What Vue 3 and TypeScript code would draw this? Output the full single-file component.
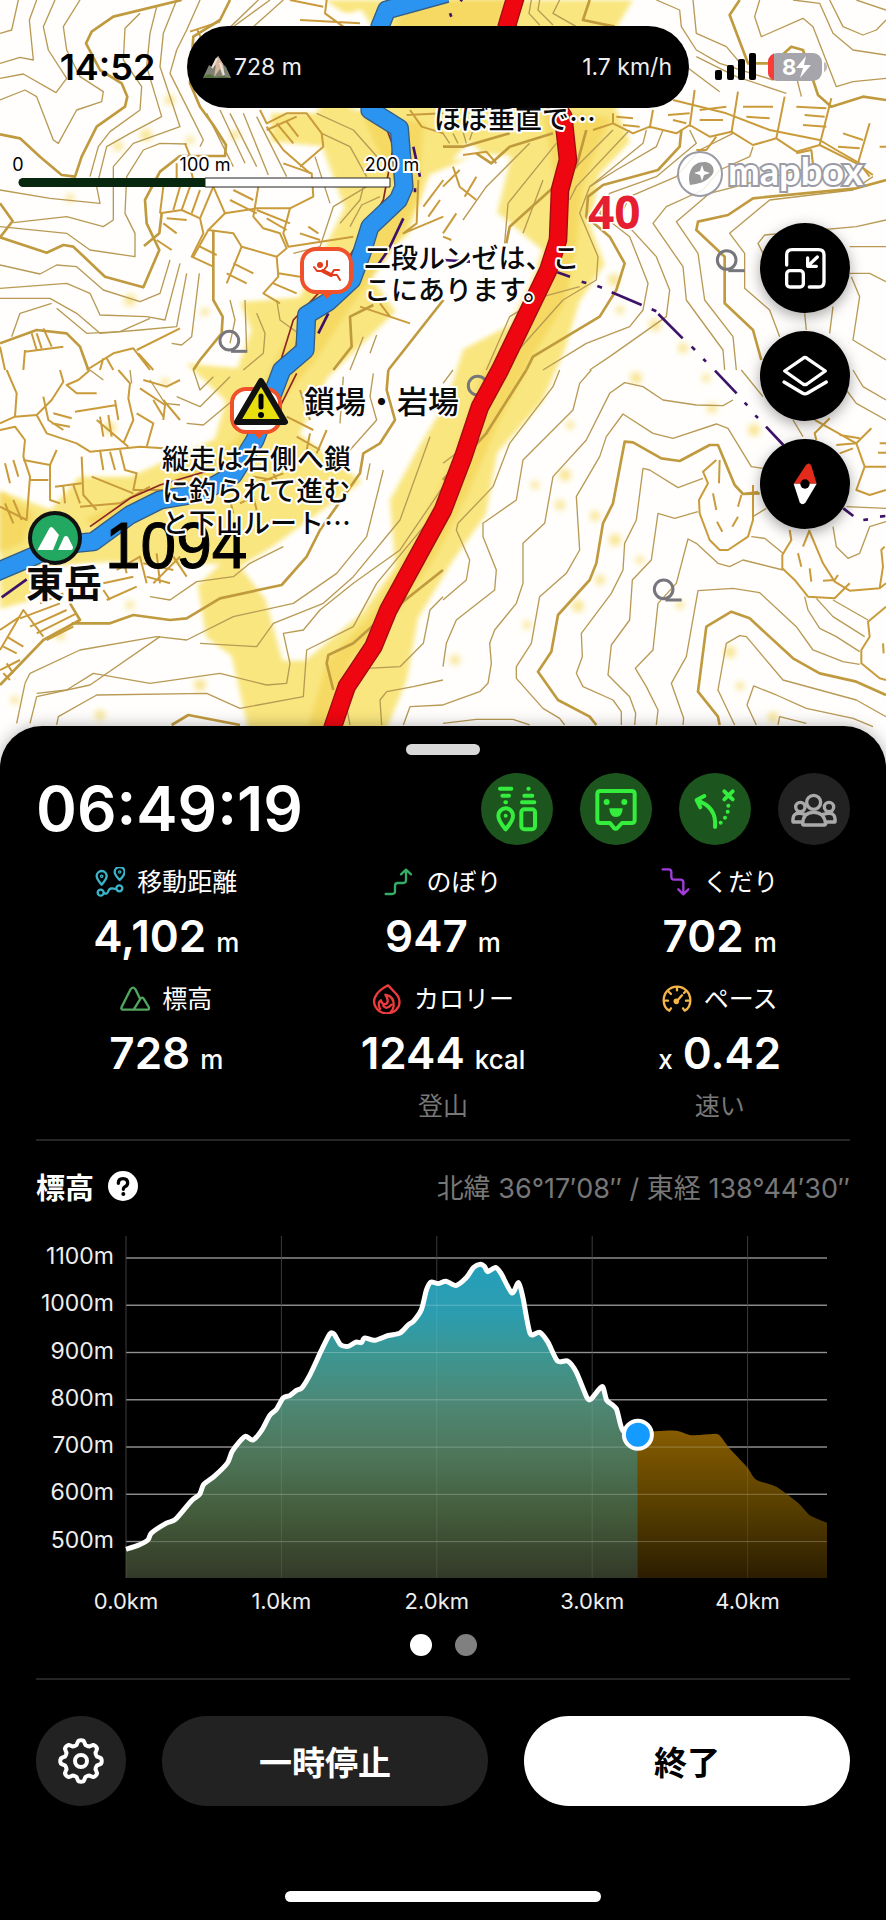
<script setup lang="ts">
type Point = [number, number]

interface Metric {
  icon: string
  label: string
  value: string
  unit: string
  prefix?: boolean
  note?: string
}

const metrics: Metric[] = [
  { icon: 'distance', label: '移動距離', value: '4,102', unit: 'm' },
  { icon: 'climb', label: 'のぼり', value: '947', unit: 'm' },
  { icon: 'descend', label: 'くだり', value: '702', unit: 'm' },
  { icon: 'mountain', label: '標高', value: '728', unit: 'm' },
  { icon: 'flame', label: 'カロリー', value: '1244', unit: 'kcal', note: '登山' },
  { icon: 'gauge', label: 'ペース', value: '0.42', unit: 'x', prefix: true, note: '速い' },
]

/* elevation profile, [km, m] */
const walked: Point[] = [
  [0, 484], [0.077, 492], [0.142, 504], [0.163, 518], [0.26, 539], [0.318, 547], [0.42, 586],
  [0.474, 600], [0.5, 621], [0.571, 639], [0.652, 666], [0.682, 690], [0.732, 712], [0.77, 723],
  [0.818, 715], [0.876, 737], [0.925, 767], [0.968, 780], [1.011, 804], [1.054, 809], [1.097, 820],
  [1.133, 826], [1.187, 855], [1.258, 905], [1.311, 939], [1.339, 939], [1.38, 917], [1.429, 913],
  [1.479, 922], [1.515, 921], [1.536, 931], [1.601, 926], [1.687, 936], [1.762, 941], [1.815, 958],
  [1.852, 967], [1.901, 991], [1.933, 1032], [1.961, 1049], [2.009, 1046], [2.06, 1051],
  [2.124, 1042], [2.189, 1058], [2.236, 1080], [2.281, 1087], [2.307, 1082], [2.328, 1071],
  [2.378, 1080], [2.414, 1067], [2.483, 1026], [2.526, 1048], [2.554, 1017], [2.601, 940],
  [2.661, 943], [2.715, 922], [2.777, 882], [2.843, 882], [2.897, 859], [2.966, 805], [2.994, 802],
  [3.064, 828], [3.094, 799], [3.155, 781], [3.197, 735], [3.294, 726],
]
const ahead: Point[] = [
  [3.294, 731], [3.498, 735], [3.562, 733], [3.637, 725], [3.755, 727], [3.815, 726], [3.884, 697],
  [3.996, 658], [4.056, 631], [4.185, 616], [4.324, 582], [4.4, 556], [4.511, 540],
]

const left = 90
const right = 791
const bottom = 358
const px = (km: number) => left + km * 155.4
const py = (m: number) => 38 + (1100 - m) * 0.4727

function curve(points: Point[]): string {
  const p = points.map(([km, m]): Point => [px(km), py(m)])
  let d = `M${p[0][0]} ${p[0][1]}`
  for (let i = 0; i < p.length - 1; i++) {
    const a = p[Math.max(0, i - 1)]
    const b = p[i]
    const c = p[i + 1]
    const e = p[Math.min(p.length - 1, i + 2)]
    const k = 8
    d += ` C${b[0] + (c[0] - a[0]) / k} ${b[1] + (c[1] - a[1]) / k} ${c[0] - (e[0] - b[0]) / k} ${c[1] - (e[1] - b[1]) / k} ${c[0]} ${c[1]}`
  }
  return d
}
const walkedLine = curve(walked)
const walkedArea = `${walkedLine} V${bottom} H${left} Z`
const aheadArea = `${curve(ahead)} V${bottom} H${px(3.294)} Z`
const levels = [1100, 1000, 900, 800, 700, 600, 500]
const kms = [0, 1, 2, 3, 4]

const gear = Array.from({ length: 96 }, (_, i) => {
  const t = (i / 96) * Math.PI * 2
  const r = 18.5 + 2.3 * Math.tanh(2 * Math.cos(8 * t))
  return `${(24 + r * Math.sin(t)).toFixed(2)},${(24 - r * Math.cos(t)).toFixed(2)}`
}).join(' ')

const speckles: Point[] = [
  [70, 198], [118, 146], [146, 135], [190, 140], [235, 135], [130, 300], [205, 312], [170, 100],
  [110, 428], [165, 382], [65, 505], [130, 520], [15, 700], [100, 715], [200, 685], [130, 605],
  [60, 635], [636, 378], [706, 378], [712, 408], [754, 430], [570, 425], [595, 516], [615, 540],
  [640, 560], [600, 580], [578, 606], [527, 625], [455, 660], [730, 652], [740, 686], [773, 717],
  [655, 325], [620, 310], [683, 348], [614, 280], [535, 485], [560, 505], [565, 475], [680, 605],
]

/* contour lines, drawn in thirds of a map unit, one group per tile */
const tiles = [
  {
    x: 0, y: 0,
    thick: [
      'M545 0 L340 50 275 95 258 130 300 210 365 250 382 290 375 320 290 380 245 470 225 530 185 525 120 470 60 415 0 403',
      'M690 0 L660 60 580 110 570 250 600 320 640 375 678 435 675 468 540 468 480 515 435 600 440 670 478 750 430 862 315 830 220 740 190 735 140 758 0 712',
      'M0 610 L38 663 0 712', 'M432 738 L478 700 485 640',
      'M640 690 L640 900 668 950 665 1000 600 1080 580 1110',
      'M1330 900 L1165 1110', 'M1120 915 L1050 950 1055 1040 1000 1110',
      'M0 1030 L110 990 200 1000 240 1040 265 1110',
    ],
    thin: [
      'M55 0 L35 90 0 100', 'M110 0 L88 60 100 180 60 172 0 190', 'M165 0 L130 80 145 150 200 235 168 278 70 222 0 235',
      'M240 0 L190 80 200 150 240 230 310 275 305 305 230 330 175 430 160 420 110 290 75 270 0 300',
      'M420 40 L375 85 370 180 425 260 420 330 330 395 295 440 270 530',
      'M470 20 L450 100 440 200 485 350 390 400 320 440 290 560 300 610 150 595 0 570',
      'M530 0 L490 100 480 200 540 380 400 430 340 500 340 660 310 680 200 650 40 668',
      'M600 0 L560 90 530 150 510 220 560 320 610 420 600 440', 'M560 432 L480 430 430 450 380 530 375 640 405 700 405 770 270 750 200 700 0 680',
      'M0 795 L120 822 170 795 230 800 310 870 420 905 480 880 510 780',
      'M0 865 L200 850 270 880 300 945 440 950 495 960 540 790', 'M0 895 L150 895 230 940 300 1000 420 990 530 980 560 820',
      'M155 910 L60 940 35 1010', 'M170 925 L260 1000 360 995 450 955', 'M515 1030 L545 1035 575 1010 598 820',
      'M775 0 L640 130', 'M810 0 L700 80', 'M850 0 L760 80', 'M620 340 L700 500', 'M660 330 L735 490', 'M690 340 L770 500',
      'M730 340 L805 525', 'M770 350 L860 530', 'M950 340 L1060 390 1140 480', 'M965 400 L1050 440 1100 530',
      'M1090 560 L1080 600 1020 670', 'M1140 590 L1085 615 1050 680', 'M1100 560 L1000 620 960 740 880 760', 'M945 470 L990 610',
      'M690 900 L705 960 690 1030', 'M735 900 L740 1050', 'M770 940 L795 1000 790 1060 730 1110', 'M830 900 L840 960 895 1000 880 1060',
      'M1050 1110 L1090 1010', 'M1110 1060 L1130 1005',
    ],
    cliff: [
      'M480 640 L545 630 600 655 610 700 575 770 640 800', 'M600 655 L640 560 M480 640 L490 560 M545 630 L570 560 M520 630 L540 560 M575 640 L600 570',
      'M490 670 L530 700 M470 720 L515 750 M500 655 L560 660', 'M640 560 L675 640 770 625 870 625 940 590 935 520 850 490',
      'M675 640 L625 690 700 700 725 740 830 770 860 745 840 700 790 685 760 650 775 560', 'M625 690 L580 770 M600 740 L650 765 M700 570 L760 600 M690 600 L770 640',
      'M770 630 L870 670 M800 655 L860 690 M725 740 L680 850 M700 790 L760 820 M680 820 L740 850', 'M830 770 L835 830 790 880 840 910 M835 820 L900 830 M820 850 L890 880',
      'M870 625 L850 700 865 740 1060 710 M900 700 L960 720 M925 680 L955 700', 'M780 330 L800 370 860 340 920 340 965 400 970 440 900 500',
      'M800 390 L890 350 M830 370 L880 430 M860 365 L895 410 M800 380 L850 450 930 520', 'M530 490 L530 560 M555 430 L570 468 M570 500 L580 540',
      'M1230 330 L1265 380 1330 400 M1220 345 L1330 340 M1255 540 L1250 670 1210 700 1330 650', 'M1270 620 L1330 540 M1285 650 L1320 600 M1080 920 L1230 970 M1140 910 L1170 950',
      'M0 1040 L15 1110 M75 1050 L70 1110 M95 1000 L110 1050 M130 985 L155 1040 M75 1055 L190 1040 M110 1000 L125 1045',
      'M260 1110 L340 1060 400 1045 450 1110 M310 1075 L300 1110 M320 1075 L340 1110 M410 1050 L540 985 M415 1060 L460 1110',
      'M900 60 L1080 70 M980 0 L975 40 1030 80 M870 0 L970 20 M570 95 L660 65 M590 85 L610 130',
    ],
  },
  {
    x: 1329, y: 0,
    thick: [
      'M890 0 L860 45 915 190 990 190 1045 140 1080 150 1125 285 1165 320 1260 290 1329 300',
      'M440 0 L420 60 515 80', 'M715 390 L710 440 645 510 480 555 435 590 430 650 500 710 545 790 520 870 470 950 270 1070 250 1110',
      'M1329 540 L1240 565 930 595 855 645 765 665 760 690 845 770 845 910 930 990 955 1080', 'M200 400 L60 440 0 440',
      'M190 730 L200 680 400 500 430 390', 'M100 460 L145 490 200 440 330 400',
    ],
    thin: [
      'M265 0 L258 40 290 75', 'M290 0 L285 30 330 75', 'M350 0 L330 40 400 80', 'M640 0 L710 30 715 80 760 150 830 190 990 240', 'M750 0 L760 100 850 140 905 205',
      'M950 0 L935 50 955 110 1080 55 1110 80 1180 260 1230 245 1329 235', 'M1050 0 L1130 10 1170 100 1230 150 1329 165', 'M1160 0 L1200 80 1260 105 1300 90 1329 60', 'M1240 0 L1329 30',
      'M1060 230 L1075 290', 'M760 170 L880 230 1030 280', 'M730 200 L830 275', 'M740 390 L760 430 640 530 500 580 470 640 560 710 615 850 600 930 560 980 430 1030 300 1110',
      'M870 400 L770 450 700 530 560 590 530 650 640 770 680 870 670 950 500 1070 440 1110', 'M930 440 L920 470 830 510 780 570 670 620 630 670 720 800 730 900 840 1050 845 1110',
      'M1105 450 L1110 500 800 580 700 665 765 760 785 900 870 1010 880 1110', 'M1290 530 L1230 570 980 600 860 700 905 760 905 865 980 930 1010 1010',
      'M1329 660 L1240 680 965 705 945 730 965 770', 'M1329 740 L1220 740', 'M1220 820 L1280 820 1329 845', 'M1225 830 L1250 890 1230 1020 1329 1080', 'M1085 940 L1090 990 M1170 920 L1160 1000',
      'M610 390 L600 430 440 560 410 640 465 770 460 840 360 900 200 1080', 'M560 390 L400 560 380 600', 'M510 390 L400 500', 'M660 390 L640 440 520 510 440 560',
      'M410 860 L300 890 200 950 130 1110', 'M240 700 L300 540 M185 730 L195 610 340 430', 'M60 660 L130 560 260 430', 'M0 400 L20 430 M30 400 L45 430 M60 395 L70 430 M90 390 L80 420',
    ],
    cliff: [
      'M690 300 L850 340 980 390 1130 420 1180 450 1250 490 1280 530', 'M450 390 L510 370 570 400 620 380 700 400 740 375 800 410 865 395 930 435 1000 415 1060 455 1130 435 1240 490 1290 525',
      'M510 340 L510 370 M630 330 L620 385 M755 270 L740 380 M885 275 L865 400 M1025 290 L1000 415 M1165 295 L1130 435 M1280 370 L1245 490',
      'M520 350 L570 355 M540 375 L590 380 M675 345 L740 340 M690 360 L730 370 M770 330 L850 320 M770 360 L840 360 M900 320 L990 320 M910 350 L980 355 M1060 320 L1150 325 M1085 345 L1145 350 M1080 375 L1150 380 M1200 400 L1260 420 M1185 440 L1250 445',
      'M1060 460 L1105 450 1110 490 M820 410 L790 450 760 450 M1310 440 L1329 440', 'M0 560 L50 510 M30 500 L50 560 100 600 M100 530 L65 590 M0 700 L40 640 M0 710 L25 720 M60 465 L130 455 160 490',
    ],
  },
  {
    x: 0, y: 1110,
    thick: [
      'M1165 0 L1160 60 1185 150 1140 220 1090 250 1080 310 960 480 920 560 845 645 660 685 560 745 510 750 400 735 330 760 215 760',
      'M515 1065 L565 1035 720 1065', 'M1329 600 L1115 770 1060 820 985 855 980 880 1000 960', 'M0 945 L130 810 240 750 210 700',
    ],
    thin: [
      'M450 680 L510 690 590 635 700 620 750 580 850 530', 'M75 940 L90 910 240 840 470 800 560 810 700 740 880 700 1010 610 1100 500 1150 300',
      'M90 1060 L110 980 270 945 480 800', 'M50 1060 L75 940', 'M170 1065 L175 1040 290 975 620 970 720 1015 910 980 920 840 1060 770 1130 640 1329 400',
      'M110 970 L200 960 280 910 450 940 660 910 800 945 860 940 870 880 850 790 910 780 960 720 1060 640 1200 540 1329 350',
      'M600 820 L770 830 820 760 970 700 1060 620 1200 450 1290 200', 'M1110 280 L1100 330 M1120 10 L1110 80 1130 150 1050 240 M1030 20 L1020 160',
      'M1329 680 L1290 720 1270 820 1200 890 1100 895', 'M1329 930 L1240 950 1160 965 1140 990 1145 1065', 'M1329 1005 L1230 1010 1210 1065', 'M1030 960 L1050 1065',
      'M270 0 L310 30 M390 0 L395 40 M450 30 L495 100 540 105 M530 80 L600 110 690 20 M560 160 L610 165 700 90', 'M640 20 L600 60 580 0',
    ],
    cliff: [
      'M0 160 L45 140 110 135 140 190 230 220 270 245 420 230 490 235', 'M45 140 L50 70 20 0 M110 135 L155 90 190 35 180 0 M130 80 L145 150 190 180 M160 130 L215 145 M155 160 L210 170',
      'M270 0 L235 30 200 45 230 70 290 70 M355 0 L390 40 385 85 400 150 370 220 M225 125 L350 105 M300 140 L310 200 M325 135 L335 200 M345 90 L355 150 M290 150 L385 230',
      'M440 230 L460 160 410 130 M430 30 L500 50 540 30 M420 55 L495 105 490 150 M490 90 L540 150 M460 90 L490 140', 'M0 180 L45 170 75 210 70 260 90 320 80 450 0 410',
      'M70 270 L150 285 170 240 M90 330 L145 330 M15 280 L30 340 M40 270 L55 320 M150 285 L150 390 180 400 M165 350 L245 340 M190 350 L195 400 M220 345 L240 400 M245 260 L250 375 290 420',
      'M300 240 L310 300 M330 245 L345 300 M360 240 L375 300 410 310 400 360 490 360 M275 320 L400 370 M15 400 L40 460 M40 390 L65 450 M240 410 L360 400 450 350',
      'M0 840 L70 720 130 800 M10 830 L50 850 M20 800 L70 830 M0 900 L60 870 M0 780 L60 740 M60 745 L180 700 M90 770 L200 720 M110 790 L230 730 M120 700 L190 670 M140 810 L220 770 M20 880 L40 910 M10 910 L30 930',
      'M310 640 L400 620 M320 690 L410 650 M350 600 L420 560 440 640 M430 580 L520 600 M440 620 L510 640 M470 550 L480 640 M520 560 L560 620 M460 640 L540 560 M370 570 L380 610 M310 660 L330 690',
      'M760 320 L820 330 M770 340 L850 310 M820 310 L830 330 M690 390 L700 430 M720 400 L760 380 770 420 M890 200 L960 240 M930 190 L920 240 M980 180 L950 250 M900 60 L930 150 M860 140 L940 180',
    ],
  },
  {
    x: 1329, y: 1110,
    thick: [
      'M460 1065 L440 1040 345 990 285 905 325 845 345 735 440 630 460 580 480 460 510 400 545 215 570 217 655 265 710 273 800 225 825 225 875 345 900 372 950 370',
      'M830 1065 L825 1040 765 965 790 770 865 725 920 745 1050 865 1130 910 1240 935 1329 975', 'M250 0 L130 190 0 330',
    ],
    thin: [
      'M350 0 L330 50 200 220 150 350 45 460 40 480 80 570 70 630 0 690', 'M445 0 L410 40 390 120 240 270 220 390 120 460 120 500 160 600 155 660 40 750 10 820 0 890',
      'M0 1005 L110 965 135 940 145 880 140 820 155 780 220 700 240 640 240 520 305 460 330 320 430 210 500 70 545 38 600 50 660 90 760 105 840 107 870 90',
      'M365 1065 L350 1045 300 1015 220 925 220 890 265 820 290 680 370 610 410 540 400 380 470 260 490 200 540 132 630 190 690 205 820 162 855 175 925 290 960 295',
      'M535 1065 L535 1025 510 990 420 950 400 910 418 860 415 790 505 670 540 600 545 520 580 450 600 295 620 300 705 353 780 325', 'M575 1065 L578 1030 560 980 495 915 505 825 560 750 568 630 625 570 645 430 695 445 765 425',
      'M640 1065 L645 1020 610 950 577 895 630 840 645 700 700 640 735 507 760 520 825 580 860 590 900 570 1020 600', 'M720 1065 L722 1045 685 940 730 860 765 662 870 655 950 668 1060 770 1110 840 1200 875 1250 883',
      'M875 1065 L825 960 850 820 890 797 910 800 1020 930 1240 990 1329 1040', 'M940 1065 L912 1005 932 948 1000 975 1090 1015 1230 1045 1290 1070', 'M1005 1065 L1010 1040 1090 1060',
      'M0 1060 L100 1048 210 1048 260 1065', 'M895 0 L960 80 M1050 150 L1080 200 M1210 60 L1240 100 1329 150', 'M1170 470 L1180 530 1215 565 1250 550 1280 470 1329 455', 'M1210 410 L1329 415',
      'M925 500 L965 505 1020 550 M930 440 L970 415', 'M1085 680 L1095 720 1130 775 1180 800 1250 845 M1120 685 L1170 740 1265 800 M1170 690 L1275 750', 'M1230 0 L1260 50 1329 90', 'M0 40 L30 0 M0 280 L80 220',
    ],
    cliff: [
      'M820 270 L780 305 795 340 768 390 770 430 800 510 830 540 855 540 915 500 930 450 930 345', 'M830 270 L828 340 M810 370 L820 420 M822 455 L838 485 M895 375 L885 410 M885 440 L868 470 M900 372 L945 365',
      'M1040 480 L1045 510 1018 555 1018 595 1055 630 1095 680 1175 685 1220 640', 'M1100 480 L1080 530 M1100 485 L1140 580 1175 635 1220 662 1310 655 1329 640 M1065 550 L1075 590 M1100 595 L1105 635 M1140 632 L1175 630 1185 615',
      'M1115 150 L1240 220 1285 175 M1160 145 L1115 190 1120 210 M1190 195 L1250 205 M1180 225 L1240 220 1265 290 1329 290 M1190 250 L1230 235 M1265 290 L1240 360 1280 375 1329 360 M1310 220 L1329 220 M1305 248 L1329 248',
      'M1329 710 L1275 755 1280 800 1255 840 1255 880 1310 925 1329 930 M1320 820 L1322 850 M1325 530 L1315 540 1320 590 1310 655',
    ],
  },
]
</script>

<template>
  <main class="app">
    <header class="map">
      <svg class="terrain" viewBox="0 0 886 766" preserveAspectRatio="xMidYMin slice">
        <defs>
          <filter id="soft" x="-5%" y="-5%" width="110%" height="110%"><feGaussianBlur stdDeviation="5" /></filter>
          <filter id="dust" x="-5%" y="-5%" width="110%" height="110%"><feGaussianBlur stdDeviation="3" /></filter>
        </defs>
        <rect width="886" height="766" fill="#fffefc" />
        <g transform="scale(0.565 0.472)">
          <g filter="url(#soft)" fill="#f9e67f">
            <path d="M575 0H1120L1090 60V230L1115 300L1060 370L1045 480L1070 560L1025 640L1000 740L960 850L880 960L860 1090L800 1190L740 1310L720 1440L665 1600H450L410 1390L365 1350L350 1240L390 1195L190 1190L90 1200L60 1270L0 1290V1040L90 1080L140 1010L230 1010L380 930L400 850L330 770L420 780L445 700L425 640L530 630L560 560L610 440L570 310L480 300V240H560L650 60Z" />
          </g>
          <g filter="url(#soft)" fill="#fffefc">
            <path d="M760 370L850 325L905 330L880 450L960 530L940 600L900 690L820 740L790 850L740 950L690 1060L700 1200L640 1300L540 1400L500 1400L470 1270L425 1200L480 1160L640 1020L530 920L580 800L700 660L640 560L720 500Z" />
            <path d="M640 20L660 60L600 110L580 40Z M830 300L860 330L800 340Z M600 90L660 240L620 230Z" />
          </g>
          <g filter="url(#soft)" fill="#f5d962">
            <path d="M960 230L1080 250L1050 330L1030 400L1020 520L1000 640L940 760L880 900L830 1040L770 1180L700 1300L620 1400L580 1540H545L580 1400L660 1300L740 1130L800 980L850 800L950 620L990 430Z" />
            <path d="M640 240L750 260L740 420L700 520L620 650L560 760L490 860L430 960L300 1070L180 1120L150 1100L300 1020L420 930L480 780L540 650L640 520L700 400Z" />
            <path d="M0 1040L60 1090L40 1150L0 1170Z M720 0H900L880 60H700Z" />
          </g>
        </g>
        <g filter="url(#dust)" fill="#f8e48e">
          <circle v-for="(p, i) in speckles" :key="i" :cx="p[0]" :cy="p[1]" :r="4 + (i % 3)" />
        </g>

        <g transform="scale(0.33333)" class="lines">
          <g v-for="tile in tiles" :key="`${tile.x}-${tile.y}`" :transform="`translate(${tile.x} ${tile.y})`">
            <path v-for="d in tile.thin" :key="d" :d="d" class="contour" />
            <path v-for="d in tile.cliff" :key="d" :d="d" class="cliff" />
            <path v-for="d in tile.thick" :key="d" :d="d" class="index" />
          </g>

          <g class="tree">
            <g v-for="(p, i) in [[688,1022],[2180,780],[1433,1157],[1991,1768]]" :key="i" :transform="`translate(${p[0]} ${p[1]})`">
              <circle r="28" /><path d="M5 32H54" />
            </g>
          </g>

          <path class="track" d="M1150 360L1180 440L1150 600L1030 800L880 960L840 1090M890 1120L830 1240L700 1390L480 1455L390 1495L270 1580" />
          <g class="border">
            <path d="M1240 440L1260 530M1245 565v12M1210 655L1165 750L1130 800M985 940L955 1000M1330 780L1410 785M1672 817L1710 830M1745 845l14 4M1792 858l14 5M1835 877L1925 915M1955 928l14 6M1975 942L2048 1015M2075 1040l10 10M2110 1077l8 8M2145 1112L2210 1180M2234 1208l8 8M2266 1246l8 8M2298 1280L2350 1335M2530 1525L2560 1548M2590 1560l14 -2M2640 1550l16 -2M5 1792L80 1738M1350 40l4 10M1382 4l5 -8" />
          </g>
          <path class="blue-edge" d="M1340 -20L1160 30L1140 80L1110 330L1198 385L1212 560L1195 600L1110 680L1085 760L1055 840L985 905L920 945L915 1050L845 1110L830 1150L765 1320L700 1425L600 1480L480 1500L390 1545L280 1625L180 1635L-20 1720" />
          <path class="blue" d="M1340 -20L1160 30L1140 80L1110 330L1198 385L1212 560L1195 600L1110 680L1085 760L1055 840L985 905L920 945L915 1050L845 1110L830 1150L765 1320L700 1425L600 1480L480 1500L390 1545L280 1625L180 1635L-20 1720" />
          <path class="red-edge" d="M1550 -20L1520 80L1690 350L1704 480L1680 570L1674 720L1645 810L1500 1110L1440 1220L1390 1370L1329 1530L1165 1830L1120 1940L1040 2060L985 2220" />
          <path class="red" d="M1550 -20L1520 80L1690 350L1704 480L1680 570L1674 720L1645 810L1500 1110L1440 1220L1390 1370L1329 1530L1165 1830L1120 1940L1040 2060L985 2220" />
        </g>

        <g class="pin">
          <path d="M320 291l7 8 7-8z" fill="#f4511e" />
          <rect x="302" y="249" width="49" height="43" rx="14" />
          <g fill="none" stroke="#e23c1c" stroke-width="2" stroke-linecap="round" stroke-linejoin="round">
            <path d="M314 267L317 271H323M327 261V266L323 271" />
            <path d="M323 271L331 275L334 270H339M331 275L337 275L340 280" />
            <path d="M323 271L331 275" stroke-width="4" />
            <circle cx="320" cy="265" r="2" fill="#e23c1c" />
          </g>
          <path d="M252 431l7 8 7-8z" fill="#f4511e" />
          <rect x="232" y="389" width="48" height="43" rx="14" />
        </g>
        <path d="M261 381L285 422H237Z" fill="#eadf0e" stroke="#111" stroke-width="6" stroke-linejoin="round" />
        <path d="M261 396V407" stroke="#000" stroke-width="5" stroke-linecap="round" />
        <circle cx="261" cy="415" r="3" />

        <text class="height" x="105" y="568">1094</text>
        <circle cx="55" cy="538" r="25" fill="#23a862" stroke="#111" stroke-width="4" />
        <path d="M38 549L49 529Q51 525 54 529L59 535L53 550H39Q37 551 38 549ZM58 550L64 537Q66 535 68 537L73 547Q73 550 71 550Z" fill="#fff" />
        <g class="place">
          <text x="434" y="129">ほぼ垂直で…</text>
          <text x="364" y="268">二段ルンゼは、こ</text>
          <text x="364" y="300">こにあります。</text>
          <text x="304" y="413" class="large">鎖場・岩場</text>
          <text x="162" y="469">縦走は右側へ鎖</text>
          <text x="162" y="501">に釣られて進む</text>
          <text x="162" y="533">と下山ルート…</text>
          <text x="26" y="597" class="summit">東岳</text>
        </g>
        <text class="speed" x="588" y="229">40</text>

        <g class="scale">
          <path d="M205 178H390V187H205Z" fill="#fff" stroke="#222" />
          <path d="M23 178H205V187H23A4 4 0 0 1 23 178Z" fill="#07280e" />
          <text x="18" y="171">0</text>
          <text x="205" y="171">100 m</text>
          <text x="392" y="171">200 m</text>
        </g>

        <g class="brand">
          <circle cx="700" cy="174" r="22" fill="#fff" fill-opacity=".85" stroke="#9a9ba5" stroke-width="2" />
          <path d="M690 185C687 173 692 162 704 162C714 162 716 172 711 176C706 182 698 184 690 185Z" fill="#999" />
          <path d="M702 165l2 6 6 2-6 2-2 6-2-6-6-2 6-2z" fill="#fff" />
          <text x="728" y="185">mapbox</text>
        </g>
      </svg>

      <div class="status">
        <time class="clock">14:52</time>
        <div class="island">
          <span class="island-item">
            <svg width="28" height="24" viewBox="0 0 28 24">
              <path d="M0 23L6 10L9 12L15 1L20 9L23 12L28 23Z" fill="#7d8072" />
              <path d="M15 1L10 12L13 10L11 22L17 14L20 22L21 15L20 9Z" fill="#d9b8a0" />
              <path d="M14 3L9 13M17 8L21 20" stroke="#e8e4d8" stroke-width="2" />
              <path d="M0 23Q6 16 12 22L20 21L28 23Z" fill="#56703c" />
            </svg>
            728 m
          </span>
          <span>1.7 km/h</span>
        </div>
        <div class="signals">
          <svg width="42" height="28" viewBox="0 0 42 28" fill="#000">
            <rect x="0" y="17" width="7" height="10" rx="2" /><rect x="12" y="12" width="7" height="15" rx="2" />
            <rect x="23" y="6" width="7" height="21" rx="2" /><rect x="34" y="0" width="7" height="27" rx="2" />
          </svg>
          <svg width="60" height="28" viewBox="0 0 60 28">
            <rect width="54" height="28" rx="9" fill="#a5a5ab" />
            <path d="M6 0.5Q0 3 0 9V19Q0 25 6 27.500Z" fill="#fb3b36" />
            <path d="M56 9Q59 10 59 14Q59 18 56 19Z" fill="#bbb" />
            <text x="14" y="22" fill="#fff" class="battery">8</text>
            <path d="M38 3L28 15H35L32 25L43 12H36Z" fill="#fff" />
          </svg>
        </div>
      </div>

      <nav class="tools" aria-label="地図">
        <button class="tool" aria-label="縮小表示">
          <svg viewBox="0 0 270 270" class="stroke">
            <path d="M80 126V96Q80 80 96 80H176Q192 80 192 96V176Q192 192 176 192H148" />
            <rect x="80" y="143" width="50" height="49" rx="10" />
            <path d="M172 102L145 128M143 105V130H169" />
          </svg>
        </button>
        <button class="tool" aria-label="レイヤー">
          <svg viewBox="0 0 270 270" class="stroke">
            <path d="M129 82Q135 77 141 82L196 120L141 159Q135 163 129 159L74 120Z" />
            <path d="M72 153L127 186Q135 191 143 186L199 153" />
          </svg>
        </button>
        <button class="tool" aria-label="コンパス">
          <svg viewBox="0 0 270 270">
            <path d="M101 134L138 78Q147 68 154 80L170 134Z" fill="#e22b1a" />
            <path d="M101 134H170L137 190Q127 202 119 190Z" fill="#fff" />
            <circle cx="135" cy="135" r="14" />
          </svg>
        </button>
      </nav>
    </header>

    <section class="sheet">
      <div class="handle"></div>
      <div class="summary">
        <h1 class="timer">06:49:19</h1>
        <div class="modes">
          <button class="mode on" aria-label="位置共有">
            <svg viewBox="0 0 216 216">
              <path d="M57 47H91M64 68H84M73 88H75M142 47H143M130 68H154M123 88H160" />
              <path d="M74 169Q52 143 52 128A22 22 0 0 1 96 128Q96 143 74 169Z" />
              <circle cx="74" cy="128" r="6" class="solid" /><rect x="121" y="109" width="41" height="60" rx="9" />
            </svg>
          </button>
          <button class="mode on" aria-label="メッセージ">
            <svg viewBox="0 0 216 216">
              <path d="M61 54H155Q164 54 164 63V141Q164 150 155 150H126L112 165Q107 170 102 165L90 150H61Q52 150 52 141V63Q52 54 61 54Z" />
              <circle cx="80" cy="87" r="9" class="solid" /><circle cx="133" cy="87" r="9" class="solid" />
              <path d="M88 106H128Q127 132 108 132T88 106Z" class="solid" />
            </svg>
          </button>
          <button class="mode on" aria-label="ルート">
            <svg viewBox="0 0 216 216">
              <path d="M108 162Q114 101 53 82M76 69L53 81L64 103" />
              <path d="M136 55L161 79M161 55L136 79" />
              <path d="M148 98h.1M146 116h.1M138 134h.1M125 149h.1" />
            </svg>
          </button>
          <button class="mode" aria-label="グループ">
            <svg viewBox="0 0 216 216">
              <circle cx="107" cy="88" r="21" /><circle cx="67" cy="102" r="14" /><circle cx="153" cy="102" r="14" />
              <path d="M74 154Q74 118 107 118T143 154Q142 156 139 156H78Q74 156 74 154ZM70 147H45Q42 118 67 121L82 124M146 147H171Q174 118 149 121L134 124" />
            </svg>
          </button>
        </div>
      </div>

      <div class="metrics">
        <article v-for="m in metrics" :key="m.label" class="metric">
          <h2 class="metric-label">
            <svg class="metric-icon" viewBox="0 0 90 90">
              <g v-if="m.icon === 'distance'" stroke="#3bb3c8">
                <path d="M20 53Q5 36 5 27A15 15 0 0 1 35 27Q35 36 20 53ZM74 39Q59 23 59 15A15 15 0 0 1 89 15Q89 23 74 39Z" />
                <circle cx="20" cy="28" r="2" /><circle cx="74" cy="15" r="2" />
                <circle cx="17" cy="77" r="9" /><circle cx="73" cy="64" r="9" />
                <path d="M27 78Q36 84 40 72T62 66" />
              </g>
              <g v-else-if="m.icon === 'climb'" stroke="#35ad67">
                <path d="M5 81H25Q33 81 33 73V56Q33 48 41 48H58Q66 48 66 40V10M51 22L66 8L81 22" />
              </g>
              <g v-else-if="m.icon === 'descend'" stroke="#a13ddb">
                <path d="M5 7H23Q31 7 31 15V30Q31 38 39 38H58Q67 38 67 46V80M52 67L67 82L82 67" />
              </g>
              <g v-else-if="m.icon === 'mountain'" stroke="#50a65c">
                <path d="M8 77H82Q90 77 86 69L71 44Q67 38 62 43L41 77M59 42L47 17Q39 5 31 17L5 69Q2 76 8 77" />
              </g>
              <g v-else-if="m.icon === 'flame'" stroke="#ee3b3b">
                <path d="M48 4Q18 20 10 38Q2 53 11 69Q22 88 45 88T80 67Q88 45 70 27Q60 17 54 10Q51 7 48 4Z" />
                <path d="M24 75Q15 57 27 49Q31 64 41 60Q54 54 40 32Q68 38 65 66Q64 76 57 83M34 66Q44 78 58 62" />
              </g>
              <g v-else stroke="#f5b54a">
                <path d="M22 80Q5 72 5 48A40 40 0 0 1 85 48Q85 72 68 80L63 73M22 80L27 73" />
                <path d="M45 10V19M21 24L27 30M69 24L66 27M9 50H18M72 50H82M42 54L60 34" />
                <circle cx="43" cy="52" r="5" fill="#f5b54a" />
              </g>
            </svg>
            {{ m.label }}
          </h2>
          <p class="reading" :class="{ prefix: m.prefix }">
            <strong>{{ m.value }}</strong><span>{{ m.unit }}</span>
          </p>
          <p v-if="m.note" class="note">{{ m.note }}</p>
        </article>
      </div>

      <section class="profile">
        <div class="profile-head">
          <h2 class="profile-title">標高</h2>
          <button class="help" aria-label="ヘルプ">
            <svg viewBox="0 0 90 90">
              <circle cx="45" cy="45" r="45" fill="#fff" />
              <path d="M31 37Q31 23 45 23T59 36Q59 43 51 47Q46 50 46 55" fill="none" stroke="#000" stroke-width="10" stroke-linecap="round" />
              <circle cx="46" cy="69" r="6" />
            </svg>
          </button>
          <span class="coords">北緯 36°17′08″ / 東経 138°44′30″</span>
        </div>
        <svg class="chart" viewBox="0 0 814 400">
          <defs>
            <linearGradient id="walked" gradientUnits="userSpaceOnUse" x1="0" y1="44" x2="0" y2="358">
              <stop offset="0" stop-color="#259fbb" /><stop offset=".16" stop-color="#2c9daf" />
              <stop offset=".3" stop-color="#3d958f" /><stop offset=".44" stop-color="#4d8876" />
              <stop offset=".6" stop-color="#4e775b" /><stop offset=".8" stop-color="#435b3a" />
              <stop offset="1" stop-color="#333928" />
            </linearGradient>
            <linearGradient id="ahead" gradientUnits="userSpaceOnUse" x1="0" y1="210" x2="0" y2="358">
              <stop offset="0" stop-color="#865c00" /><stop offset=".5" stop-color="#594000" /><stop offset="1" stop-color="#2b1d00" />
            </linearGradient>
          </defs>
          <g stroke="#707070" stroke-width="1.500"><path v-for="m in levels" :key="m" :d="`M${left} ${py(m)}H${right}`" /></g>
          <g stroke="#262626"><path v-for="k in kms" :key="k" :d="`M${px(k)} 16V${bottom}`" /></g>
          <path :d="walkedArea" fill="url(#walked)" />
          <path :d="aheadArea" fill="url(#ahead)" />
          <g stroke="#fff" stroke-opacity=".25"><path v-for="m in levels" :key="m" :d="`M${left} ${py(m)}H${right}`" /></g>
          <g stroke="#fff" stroke-opacity=".1"><path v-for="k in kms" :key="k" :d="`M${px(k)} 16V${bottom}`" /></g>
          <path :d="walkedLine" fill="none" stroke="#fff" stroke-width="5" stroke-linejoin="round" />
          <circle :cx="px(3.294)" :cy="py(726)" r="14" fill="#139bff" stroke="#fff" stroke-width="4" />
          <g class="axis-y"><text v-for="m in levels" :key="m" x="78" :y="py(m) + 6">{{ m }}m</text></g>
          <g class="axis-x"><text v-for="k in kms" :key="k" :x="px(k)" y="389">{{ k }}.0km</text></g>
        </svg>
        <div class="pager"><button class="dot current" aria-label="1ページ"></button><button class="dot" aria-label="2ページ"></button></div>
      </section>

      <footer class="actions">
        <button class="settings" aria-label="設定">
          <svg viewBox="0 0 48 48"><polygon :points="gear" /><circle cx="24" cy="24" r="6" /></svg>
        </button>
        <button class="action">一時停止</button>
        <button class="action finish">終了</button>
      </footer>
      <div class="home"></div>
    </section>
  </main>
</template>

<style>
body { margin: 0; background: #000; }
</style>

<style scoped>
* { box-sizing: border-box; }
h1, h2, p { margin: 0; font-weight: 400; }
button { padding: 0; border: 0; font: inherit; color: inherit; cursor: pointer; }
svg { display: block; }
.app { min-height: 100vh; display: flex; flex-direction: column; background: #000; color: #fff; font-family: Inter, "Noto Sans CJK JP", sans-serif; }
.map { position: relative; height: 766px; flex: none; overflow: hidden; background: #fffefc; color: #000; }
.terrain { width: 100%; height: 100%; }
.lines path { fill: none; stroke-linejoin: round; }
.contour { stroke: #b89a55; stroke-width: 4; }
.index { stroke: #c09a3e; stroke-width: 8; }
.cliff { stroke: #c99b3b; stroke-width: 6; }
.track { stroke: #8b2525; stroke-width: 5; }
.border path { stroke: #3d1369; stroke-width: 8; }
.blue-edge { stroke: #345e86; stroke-width: 58; }
.blue { stroke: #2b93f0; stroke-width: 50; }
.red-edge { stroke: #a10e12; stroke-width: 56; }
.red { stroke: #ee0610; stroke-width: 48; }
.tree { stroke: #76767c; stroke-width: 9; fill: none; }
.pin rect { fill: #fff; stroke: #f0512b; stroke-width: 4; }
.place text { font: 500 27px "Noto Sans CJK JP", sans-serif; fill: #0a0a0a; stroke: #fff; stroke-width: 4; stroke-linejoin: round; paint-order: stroke; }
.place .large { font-size: 31px; }
.place .summit { font-size: 38px; font-weight: 700; }
.height { font: 400 64px "Liberation Sans", sans-serif; fill: #000; stroke: #000; stroke-width: 1; }
.speed { font: 700 46px "Noto Sans", sans-serif; fill: #e51e31; stroke: #fff; stroke-width: 3; paint-order: stroke; }
.scale text { font: 400 18px Inter, sans-serif; text-anchor: middle; fill: #000; stroke: #fff; stroke-width: 4; paint-order: stroke; }
.brand text { font: 700 38px Lato, sans-serif; fill: #fff; stroke: #9a9ba5; stroke-width: 4; paint-order: stroke; }
.status { position: absolute; inset: 26px 0 auto; height: 82px; display: grid; grid-template-columns: 187fr 502fr 197fr; align-items: center; }
.clock { padding-left: 28px; text-align: center; font-size: 36px; font-weight: 600; }
.island { height: 82px; padding: 0 17px 0 16px; display: flex; align-items: center; justify-content: space-between; border-radius: 41px; background: #000; color: #eee; font-size: 23px; }
.island-item { display: flex; align-items: center; gap: 3px; }
.signals { padding-left: 26px; display: flex; align-items: center; gap: 11px; }
.battery { font: 700 22px Inter, sans-serif; }
.tools { position: absolute; top: 223px; right: 36px; display: flex; flex-direction: column; gap: 18px; }
.tool { width: 90px; height: 90px; border-radius: 50%; background: #000; box-shadow: 0 4px 14px rgba(0, 0, 0, .35); }
.stroke { fill: none; stroke: #fff; stroke-width: 10; stroke-linecap: round; stroke-linejoin: round; }
.sheet { position: relative; flex: 1; margin-top: -40px; padding: 18px 36px; display: flex; flex-direction: column; border-radius: 42px 42px 0 0; background: #000; box-shadow: 0 0 16px rgba(0, 0, 0, .3); }
.handle { width: 74px; height: 11px; align-self: center; flex: none; border-radius: 6px; background: #d9d9d9; }
.summary { margin-top: 18px; display: flex; align-items: center; justify-content: space-between; }
.timer { font-size: 62px; line-height: 72px; font-weight: 600; }
.modes { display: flex; gap: 27px; }
.mode { width: 72px; height: 72px; border-radius: 50%; background: #222; }
.mode.on { background: #1d551f; }
.mode svg { fill: none; stroke: #aaa; stroke-width: 10; stroke-linecap: round; stroke-linejoin: round; }
.mode.on svg { stroke: #34ed3c; stroke-width: 12; }
.mode .solid { fill: #34ed3c; stroke: none; }
.metrics { margin: 16px -8px 0; display: grid; grid-template-columns: repeat(3, 1fr); }
.metric { display: flex; flex-direction: column; align-items: center; height: 117px; }
.metric:nth-child(n + 4) { height: 161px; }
.metric-label { display: flex; align-items: center; gap: 12px; font-size: 25px; line-height: 42px; }
.metric-icon { width: 30px; height: 30px; fill: none; stroke-width: 7; stroke-linecap: round; stroke-linejoin: round; }
.reading { display: flex; align-items: baseline; gap: 10px; font-size: 26px; line-height: 66px; font-weight: 500; }
.reading strong { font-size: 44px; font-weight: 600; }
.prefix { flex-direction: row-reverse; }
.note { color: #777; font-size: 25px; line-height: 26px; }
.profile { border: solid #252525; border-width: 2px 0; }
.profile-head { height: 90px; display: flex; align-items: center; }
.profile-title { font-size: 29px; font-weight: 700; }
.help { width: 30px; height: 30px; margin-left: 14px; border-radius: 50%; background: none; }
.coords { margin-left: auto; color: #777; font-size: 27px; }
.chart { width: 100%; margin-top: -11px; overflow: visible; }
.axis-y, .axis-x { fill: #eee; font-size: 22px; }
.axis-y { font-size: 23px; text-anchor: end; }
.axis-x { text-anchor: middle; }
.pager { height: 58px; padding-top: 14px; display: flex; justify-content: center; gap: 23px; }
.dot { width: 22px; height: 22px; border-radius: 50%; background: #808080; }
.dot.current { background: #fff; }
.actions { margin-top: 36px; display: grid; grid-template-columns: 90px 1fr 1fr; gap: 36px; }
.settings, .action { height: 90px; border-radius: 45px; background: #222; }
.settings { display: grid; place-items: center; }
.settings svg { width: 48px; height: 48px; fill: none; stroke: #fff; stroke-width: 4; stroke-linejoin: round; }
.action { font-size: 33px; font-weight: 700; }
.finish { background: #fff; color: #000; }
.home { width: 316px; height: 11px; margin-top: auto; align-self: center; border-radius: 6px; background: #fff; }
</style>
